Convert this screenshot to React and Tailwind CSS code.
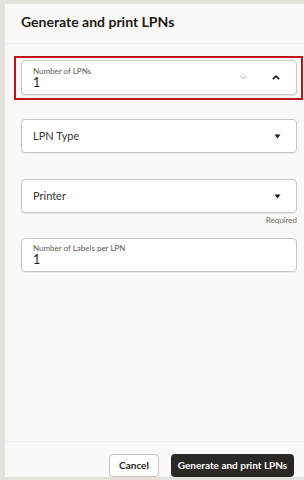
import React from 'react';

const font = { fontFamily: 'Lato, "Noto Sans", sans-serif' };

function Caret() {
  return (
    <svg width="7" height="5" viewBox="0 0 7 5" className="shrink-0">
      <path d="M0.5 0.5h6L3.5 4.5z" fill="#1f1c1a" />
    </svg>
  );
}

function SelectField({ label }) {
  return (
    <div className="flex items-center h-[34px] rounded-[4px] border border-[#cbc8c3] bg-white pl-[11px] pr-[15px] shadow-[0_1px_1px_rgba(0,0,0,0.06)]">
      <span className="flex-1 text-[11px] text-[#3a3633]">{label}</span>
      <Caret />
    </div>
  );
}

export default function App() {
  return (
    <div className="w-[304px] h-[480px] bg-[#e4e1dc] pt-[4px] pl-[5px] pb-[3px]" style={font}>
      <div className="flex flex-col h-full bg-[#faf9f7]">
        {/* Header */}
        <div className="h-[40px] shrink-0 border-b border-[#efedea] pl-[16px] pt-[8px]">
          <h1 className="text-[14px] font-bold text-[#1d1a18] leading-[20px]">Generate and print LPNs</h1>
        </div>

        {/* Body */}
        <div className="flex-1 flex flex-col pt-[12px] pl-[16px] pr-[7px]">
          <div className="-ml-[7px] -mr-[6px] h-[44px] border-2 border-[#c0141c] pl-[5px] pr-[4px] pt-[2px]">
            <div className="flex items-center h-[35px] rounded-[4px] border border-[#cbc8c3] bg-white pl-[11px] pr-[16px] shadow-[0_1px_1px_rgba(0,0,0,0.08)]">
              <div className="flex-1 flex flex-col leading-none">
                <span className="text-[8px] text-[#5f5a56] leading-[10px]">Number of LPNs</span>
                <span className="text-[12.5px] text-[#1d1a18] leading-[14px]">1</span>
              </div>
              <svg width="7" height="5" viewBox="0 0 7 5" className="mr-[25px]">
                <path d="M0.5 0.8L3.5 3.8L6.5 0.8" fill="none" stroke="#aaa6a2" strokeWidth="0.9" />
              </svg>
              <svg width="8" height="5" viewBox="0 0 8 5">
                <path d="M0.8 4.2L4 1.2L7.2 4.2" fill="none" stroke="#1f1c1a" strokeWidth="1.6" />
              </svg>
            </div>
          </div>

          <div className="mt-[19px]">
            <SelectField label="LPN Type" />
          </div>

          <div className="mt-[26px]">
            <SelectField label="Printer" />
            <div className="text-right text-[8px] text-[#6f6a65] leading-[10px] mt-[2px]">Required</div>
          </div>

          <div className="mt-[13px] flex flex-col justify-center h-[34px] rounded-[4px] border border-[#cbc8c3] bg-white pl-[11px] shadow-[0_1px_1px_rgba(0,0,0,0.06)]">
            <span className="text-[8px] text-[#5f5a56] leading-[10px]">Number of Labels per LPN</span>
            <span className="text-[12.5px] text-[#1d1a18] leading-[14px]">1</span>
          </div>
        </div>

        {/* Footer */}
        <div className="shrink-0 border-t border-[#efedea] flex justify-end gap-[12px] pt-[12px] pr-[10px]">
          <button className="h-[23px] w-[50px] rounded-[4px] border border-[#c6c3be] bg-white text-[10px] font-bold text-[#2a2623]">Cancel</button>
          <button className="h-[23px] w-[123px] rounded-[4px] bg-[#2b2724] text-[10px] font-bold text-white">Generate and print LPNs</button>
        </div>
      </div>
    </div>
  );
}
